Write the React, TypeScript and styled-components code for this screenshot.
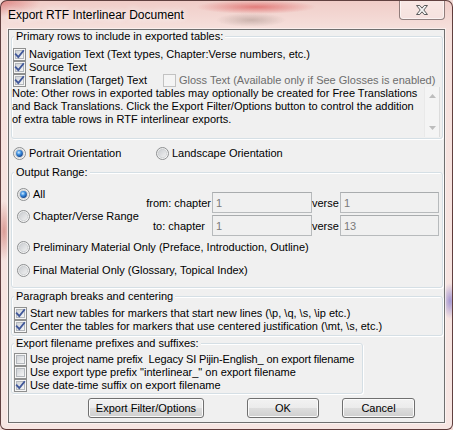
import React, { ReactElement } from "react";
import styled, { createGlobalStyle } from "styled-components";

const GlobalStyle = createGlobalStyle`
  html, body {
    margin: 0;
    padding: 0;
    background: #f3dcd8;
  }

  body {
    font-family: "Liberation Sans", Arial, sans-serif;
    font-size: 11px;
    color: #000;
  }
`;

const Defs = styled.svg`
  display: block;
  width: 0;
  height: 0;
`;

const Window = styled.div`
  box-sizing: border-box;
  width: 453px;
  height: 430px;
  display: flex;
  flex-direction: column;
  padding: 0 7px 6px 7px;
  overflow: hidden;

  border: 1px solid rgba(70, 35, 35, 0.85);
  border-radius: 7px 7px 6px 6px;
  background:
    radial-gradient(60px 7px at 255px 6px, rgba(215, 55, 55, 0.55), rgba(215, 55, 55, 0)),
    radial-gradient(35px 7px at 250px 19px, rgba(110, 90, 80, 0.3), rgba(110, 90, 80, 0)),
    radial-gradient(40px 16px at 0 0, rgba(200, 50, 50, 0.45), rgba(200, 50, 50, 0)),
    radial-gradient(8px 30px at 3px 230px, rgba(185, 70, 60, 0.45), rgba(185, 70, 60, 0)),
    radial-gradient(8px 18px at 449px 300px, rgba(110, 100, 200, 0.6), rgba(110, 100, 200, 0)),
    linear-gradient(180deg, #f0cdc8 0px, #f6e1dd 30px, #f7e6e3 100%);
`;

const TitleBar = styled.div`
  height: 28px;
  flex-shrink: 0;
  display: flex;
  justify-content: space-between;
  align-items: flex-start;
`;

const Title = styled.div`
  font-size: 12px;
  line-height: 16px;
  padding-top: 6px;
  text-shadow: 0 0 6px rgba(255, 255, 255, 0.95), 0 0 10px rgba(255, 255, 255, 0.8);
`;

const CloseButton = styled.div`
  box-sizing: border-box;
  width: 46px;
  height: 20px;
  margin-top: -1px;
  display: flex;
  align-items: center;
  justify-content: center;

  border: 1px solid rgba(60, 40, 40, 0.55);
  border-top: none;
  border-radius: 0 0 4px 4px;
  background: linear-gradient(180deg, rgba(255, 255, 255, 0.55), rgba(255, 255, 255, 0.25));
  box-shadow: inset 0 0 0 1px rgba(255, 255, 255, 0.55);
`;

const Client = styled.div`
  flex: 1;
  display: flex;
  flex-direction: column;

  background: #f0f0f0;
  border: 1px solid #6f6f6f;
  box-shadow: 0 0 0 1px rgba(255, 255, 255, 0.5);
`;

const Group = styled.fieldset<{ $top?: number; $width?: number }>`
  box-sizing: border-box;
  min-width: 0;
  margin: ${(p) => p.$top ?? 0}px 1px 0 2px;
  padding: 0;
  width: ${(p) => (p.$width ? `${p.$width}px` : "auto")};

  border: 1px solid #d5dfe5;
  border-radius: 3px;
  box-shadow: inset 1px 1px 0 #fff, 1px 1px 0 #fff;
`;

const Legend = styled.legend`
  margin-left: 2px;
  padding: 0 2px;
  line-height: 13px;
  background: #f0f0f0;
`;

const GroupBody = styled.div<{ $top: number; $bottom: number }>`
  display: flex;
  flex-direction: column;
  padding: ${(p) => p.$top}px 0 ${(p) => p.$bottom}px 0;
`;

const OptionRow = styled.div<{ $indent?: number; $top?: number }>`
  display: flex;
  align-items: center;
  height: 13px;
  padding-left: ${(p) => p.$indent ?? 1}px;
  margin-top: ${(p) => p.$top ?? 0}px;
`;

const OptionItem = styled.label<{ $width?: number; $disabled?: boolean; $tight?: boolean }>`
  display: flex;
  align-items: center;
  gap: 3px;
  white-space: pre;
  line-height: 13px;
  letter-spacing: ${(p) => (p.$tight ? "-0.15px" : "normal")};
  width: ${(p) => (p.$width ? `${p.$width}px` : "auto")};
  flex-shrink: 0;
  color: ${(p) => (p.$disabled ? "#6d6d6d" : "#000")};
`;

const NoteBox = styled.div`
  display: flex;
  height: 50px;
  margin: 0 2px 0 0;
`;

const NoteText = styled.div`
  flex: 1;
  line-height: 13px;
  white-space: nowrap;
`;

const ScrollTrack = styled.div`
  width: 16px;
  display: flex;
  flex-direction: column;
  justify-content: space-between;
  align-items: center;
  padding: 7px 0;
  box-sizing: border-box;

  background: #f4f4f4;
  border-left: 1px solid #e9e9e9;
  border-right: 1px solid #dcdcdc;
`;

const RangeTop = styled.div`
  display: flex;
  align-items: flex-start;
`;

const RadioColumn = styled.div`
  display: flex;
  flex-direction: column;
  gap: 9px;
  padding: 9px 0 0 5px;
`;

const RangeGrid = styled.div`
  display: grid;
  grid-template-columns: auto 100px 28px 99px;
  row-gap: 2px;
  align-items: center;
  margin: 13px 3px 0 auto;
`;

const RangeLabel = styled.span<{ $pad?: number }>`
  text-align: right;
  white-space: nowrap;
  padding-right: ${(p) => p.$pad ?? 1}px;
`;

const VerseLabel = styled.span`
  white-space: nowrap;
`;

const NumberField = styled.input`
  box-sizing: border-box;
  width: 100%;
  height: 21px;
  margin: 0;
  padding: 0 3px;

  font: inherit;
  color: #7a7a7a;
  background: #f0f0f0;
  border: 1px solid #b7babc;
  border-top-color: #a9acae;
  outline: none;
`;

const ButtonRow = styled.div`
  display: flex;
  margin-top: 4px;
  padding-left: 79px;
`;

const PushButton = styled.button<{ $width: number; $gap?: number }>`
  box-sizing: border-box;
  width: ${(p) => p.$width}px;
  height: 20px;
  margin: 0 0 0 ${(p) => p.$gap ?? 0}px;
  padding: 0;

  font: inherit;
  color: #000;
  border: 1px solid #707070;
  border-radius: 3px;
  background: linear-gradient(180deg, #f2f2f2 0%, #ebebeb 50%, #dddddd 51%, #cfcfcf 100%);
  box-shadow: inset 0 0 0 1px #fbfbfb;
`;

function CheckGlyph(props: { checked?: boolean; disabled?: boolean }): ReactElement {
  const { checked, disabled } = props;
  if (disabled) {
    return (
      <svg width="13" height="13" viewBox="0 0 13 13">
        <rect x="0.5" y="0.5" width="12" height="12" fill="#f4f4f4" stroke="#c2c2c2" />
      </svg>
    );
  }
  return (
    <svg width="13" height="13" viewBox="0 0 13 13">
      <rect x="0.5" y="0.5" width="12" height="12" fill="#f6f6f6" stroke="#8e8f8f" />
      <rect x="2.5" y="2.5" width="8" height="8" fill="url(#cbFill)" stroke="#b3b7bc" />
      {checked && (
        <path
          d="M2.8 6.4 L5.3 9 L10.2 3"
          fill="none"
          stroke="#41589a"
          strokeWidth="1.9"
          strokeLinecap="square"
        />
      )}
    </svg>
  );
}

function RadioGlyph(props: { checked?: boolean }): ReactElement {
  return (
    <svg width="13" height="13" viewBox="0 0 13 13">
      <circle cx="6.5" cy="6.5" r="6" fill="url(#rbOuter)" stroke="#8d8f91" />
      <circle cx="6.5" cy="6.5" r="4.2" fill="url(#rbInner)" stroke="#c7cacd" strokeWidth="0.7" />
      {props.checked && <circle cx="6.5" cy="6.5" r="3.4" fill="url(#rbDot)" />}
    </svg>
  );
}

function Check(props: {
  label: string;
  checked?: boolean;
  disabled?: boolean;
  width?: number;
  tight?: boolean;
}): ReactElement {
  return (
    <OptionItem $width={props.width} $disabled={props.disabled} $tight={props.tight}>
      <CheckGlyph checked={props.checked} disabled={props.disabled} />
      {props.label}
    </OptionItem>
  );
}

function Radio(props: { label: string; checked?: boolean; width?: number }): ReactElement {
  return (
    <OptionItem $width={props.width}>
      <RadioGlyph checked={props.checked} />
      {props.label}
    </OptionItem>
  );
}

export default function App(): ReactElement {
  return (
    <>
      <GlobalStyle />
      <Defs>
        <defs>
          <linearGradient id="cbFill" x1="0" y1="0" x2="1" y2="1">
            <stop offset="0" stopColor="#cdd1d6" />
            <stop offset="1" stopColor="#f7f7f7" />
          </linearGradient>
          <linearGradient id="rbOuter" x1="0" y1="0" x2="1" y2="1">
            <stop offset="0" stopColor="#e8e8e8" />
            <stop offset="1" stopColor="#fafafa" />
          </linearGradient>
          <linearGradient id="rbInner" x1="0" y1="0" x2="1" y2="1">
            <stop offset="0" stopColor="#c9ccd0" />
            <stop offset="1" stopColor="#f2f2f2" />
          </linearGradient>
          <radialGradient id="rbDot" cx="0.4" cy="0.35" r="0.7">
            <stop offset="0" stopColor="#d2ecff" />
            <stop offset="0.45" stopColor="#3c8fe0" />
            <stop offset="1" stopColor="#0d3b85" />
          </radialGradient>
        </defs>
      </Defs>
      <Window>
        <TitleBar>
          <Title>Export RTF Interlinear Document</Title>
          <CloseButton>
            <svg width="12" height="10" viewBox="0 0 12 10">
              <polygon
                points="0.5,0.5 3.8,0.5 6,3.2 8.2,0.5 11.5,0.5 7.8,5 11.5,9.5 8.2,9.5 6,6.8 3.8,9.5 0.5,9.5 4.2,5"
                fill="#f3f3f3"
                stroke="#5a5a5a"
                strokeWidth="1"
                strokeLinejoin="round"
              />
            </svg>
          </CloseButton>
        </TitleBar>
        <Client>
          <Group>
            <Legend>Primary rows to include in exported tables:</Legend>
            <GroupBody $top={5} $bottom={1}>
              <OptionRow>
                <Check label="Navigation Text (Text types, Chapter:Verse numbers, etc.)" checked />
              </OptionRow>
              <OptionRow>
                <Check label="Source Text" checked />
              </OptionRow>
              <OptionRow>
                <Check label="Translation (Target) Text" checked width={150} />
                <Check label="Gloss Text (Available only if See Glosses is enabled)" disabled />
              </OptionRow>
              <NoteBox>
                <NoteText>
                  Note: Other rows in exported tables may optionally be created for Free Translations
                  <br />
                  and Back Translations. Click the Export Filter/Options button to control the addition
                  <br />
                  of extra table rows in RTF interlinear exports.
                </NoteText>
                <ScrollTrack>
                  <svg width="7" height="4" viewBox="0 0 7 4">
                    <polygon points="0,4 3.5,0 7,4" fill="#bdbdbd" />
                  </svg>
                  <svg width="7" height="4" viewBox="0 0 7 4">
                    <polygon points="0,0 3.5,4 7,0" fill="#bdbdbd" />
                  </svg>
                </ScrollTrack>
              </NoteBox>
            </GroupBody>
          </Group>

          <OptionRow $indent={4} $top={8}>
            <Radio label="Portrait Orientation" checked width={143} />
            <Radio label="Landscape Orientation" />
          </OptionRow>

          <Group $top={6}>
            <Legend>Output Range:</Legend>
            <GroupBody $top={0} $bottom={10}>
              <RangeTop>
                <RadioColumn>
                  <Radio label="All" checked />
                  <Radio label="Chapter/Verse Range" />
                </RadioColumn>
                <RangeGrid>
                  <RangeLabel>from: chapter</RangeLabel>
                  <NumberField readOnly defaultValue="1" />
                  <VerseLabel>verse</VerseLabel>
                  <NumberField readOnly defaultValue="1" />
                  <RangeLabel $pad={7}>to: chapter</RangeLabel>
                  <NumberField readOnly defaultValue="1" />
                  <VerseLabel>verse</VerseLabel>
                  <NumberField readOnly defaultValue="13" />
                </RangeGrid>
              </RangeTop>
              <OptionRow $indent={5} $top={5}>
                <Radio label="Preliminary Material Only (Preface, Introduction, Outline)" />
              </OptionRow>
              <OptionRow $indent={5} $top={10}>
                <Radio label="Final Material Only (Glossary, Topical Index)" />
              </OptionRow>
            </GroupBody>
          </Group>

          <Group $top={2}>
            <Legend>Paragraph breaks and centering</Legend>
            <GroupBody $top={4} $bottom={2}>
              <OptionRow $indent={2}>
                <Check
                  label="Start new tables for markers that start new lines (\p, \q, \s, \ip etc.)"
                  checked
                />
              </OptionRow>
              <OptionRow $indent={2}>
                <Check
                  label="Center the tables for markers that use centered justification (\mt, \s, etc.)"
                  checked
                />
              </OptionRow>
            </GroupBody>
          </Group>

          <Group $top={1} $width={352}>
            <Legend>Export filename prefixes and suffixes:</Legend>
            <GroupBody $top={3} $bottom={1}>
              <OptionRow $indent={2}>
                <Check
                  label="Use project name prefix  Legacy SI Pijin-English_ on export filename"
                  tight
                />
              </OptionRow>
              <OptionRow $indent={2}>
                <Check label={'Use export type prefix "interlinear_" on export filename'} />
              </OptionRow>
              <OptionRow $indent={2}>
                <Check label="Use date-time suffix on export filename" checked />
              </OptionRow>
            </GroupBody>
          </Group>

          <ButtonRow>
            <PushButton $width={116}>Export Filter/Options</PushButton>
            <PushButton $width={72} $gap={43}>
              OK
            </PushButton>
            <PushButton $width={73} $gap={23}>
              Cancel
            </PushButton>
          </ButtonRow>
        </Client>
      </Window>
    </>
  );
}
